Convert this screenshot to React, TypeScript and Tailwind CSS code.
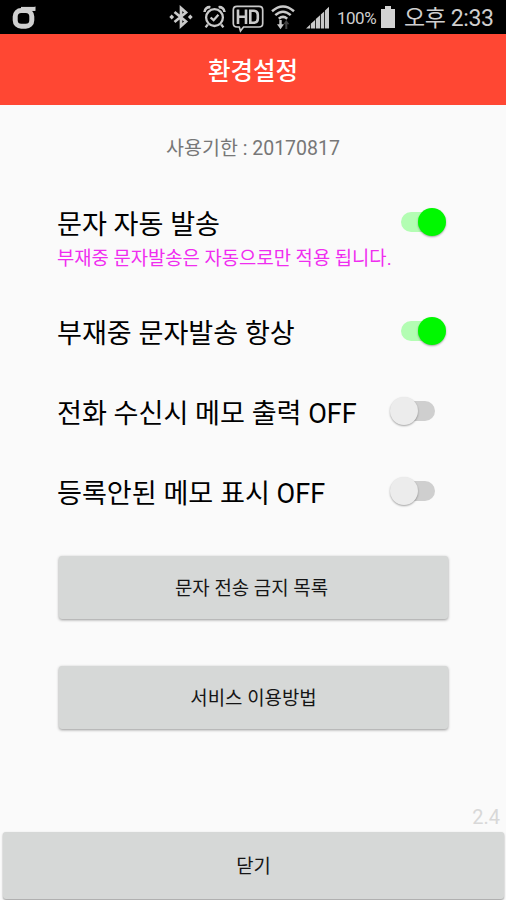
import React, { useState } from 'react';

interface SwitchProps {
  checked: boolean;
  onChange: () => void;
}

const StatusBar: React.FC = () => (
  <div className="flex h-[34px] items-center bg-black pr-3 pl-3 text-[#cfcfcf]">
    <svg width="24" height="24" viewBox="0 0 24 24" fill="none" stroke="#d0d0d0">
      <rect x="3.2" y="5.4" width="16.6" height="15.8" rx="6" strokeWidth="5" />
      <path d="M9 3.6H20.5L23.4 1.2V5.8H9Z" fill="#d0d0d0" stroke="none" />
      <path d="M9 3.9H23.2" strokeWidth="4" />
    </svg>

    <div className="ml-auto flex items-center">
      {/* bluetooth */}
      <svg width="24" height="24" viewBox="0 0 24 24" fill="none" stroke="#cacaca" strokeWidth="2.7">
        <path d="M5.5 7L17 16.5L12 21V3L17 7.5L5.5 17" />
        <path d="M.3 12L2.7 9.6L5.1 12L2.7 14.4ZM18.9 12L21.3 9.6L23.7 12L21.3 14.4Z" fill="#cacaca" stroke="none" />
      </svg>
      {/* alarm */}
      <svg className="ml-[10px]" width="23" height="24" viewBox="0 0 23 24" fill="none" stroke="#cacaca" strokeWidth="2.3">
        <circle cx="11.5" cy="12.6" r="8.4" />
        <path d="M7.6 12.5L10.6 15.2L15.4 9.8M4.8 19.5L2.6 22.4M18.2 19.5L20.4 22.4" />
        <path d="M1.5 7A5 5 0 0 1 7.4 2.2M21.5 7A5 5 0 0 0 15.6 2.2" strokeWidth="2.6" />
      </svg>
      {/* HD voice */}
      <svg className="mt-[3px] ml-[6px]" width="32" height="28" viewBox="0 0 32 28" fill="none" stroke="#cacaca">
        <path d="M5 1.4H27Q30.7 1.4 30.7 5V18.5Q30.7 22 27 22H11.5L8.5 26L7.3 22H5Q1.3 22 1.3 18.5V5Q1.3 1.4 5 1.4Z" strokeWidth="1.7" />
        <path d="M6 4.5V19M14 4.5V19M6 11.7H14M18.3 5.8V17.7H21.5Q25.8 17.7 25.8 13.7V9.8Q25.8 5.8 21.5 5.8Z" strokeWidth="2.6" />
      </svg>
      {/* wifi */}
      <svg className="ml-[7px]" width="24" height="26" viewBox="0 0 24 26" fill="none" stroke="#cacaca" strokeWidth="2.5">
        <path d="M1 7.3Q12 -2.3 23 7.3M4.3 11.2Q12 4.2 19.7 11.2M7.8 14.7Q12 11 16.2 14.7" />
        <path d="M9.5 16V22" strokeWidth="2.4" />
        <path d="M6 20.3H13L9.5 25.2Z" fill="#cacaca" stroke="none" />
        <path d="M15.3 25V19" stroke="#444" strokeWidth="2" />
        <path d="M12.3 20.3L15.3 16L18.3 20.3Z" fill="#444" stroke="none" />
      </svg>
      {/* signal */}
      <svg className="ml-[10px]" width="25" height="24" viewBox="0 0 25 24" fill="#cacaca">
        <path d="M1 23.5L5 19.7V23.5ZM5.8 18.8L10 15V23.5H5.8ZM10.8 14.1L15 10.3V23.5H10.8ZM15.8 9.5L19.2 6.4V23.5H15.8ZM20 5.5L24 1.8V23.5H20Z" />
      </svg>
      <span className="ml-[7px] w-[40px] pt-[2px] text-[17px] leading-6 tracking-[-0.5px] whitespace-nowrap">100%</span>
      <svg className="ml-[4px]" width="14" height="24" viewBox="0 0 14 24" fill="#d2d2d2">
        <path d="M4 1H10V4H14V23H0V4H4Z" />
      </svg>
      <span className="ml-[9px] w-[90px] pt-[3px] text-[23px] leading-[31px] tracking-[-0.4px] whitespace-nowrap">오후 2:33</span>
    </div>
  </div>
);

const Switch: React.FC<SwitchProps> = ({ checked, onChange }) => (
  <button
    role="switch"
    aria-checked={checked}
    onClick={onChange}
    className={`flex h-7 w-[45px] shrink-0 items-center ${checked ? '' : 'mr-[11px]'}`}
  >
    <span
      className={`flex h-5 items-center rounded-full ${
        checked ? 'w-[44px] justify-end bg-[#b3fdb3]' : 'ml-[5px] w-[40px] justify-start bg-[#cfcfcf]'
      }`}
    >
      <span
        className={`size-7 shrink-0 rounded-full shadow-[0_1px_2px_rgba(0,0,0,0.35)] ${
          checked ? '-mr-px bg-[#00f800]' : '-ml-[5px] bg-[#ececec]'
        }`}
      />
    </span>
  </button>
);

const App: React.FC = () => {
  const [autoSend, setAutoSend] = useState(true);
  const [always, setAlways] = useState(true);
  const [callMemo, setCallMemo] = useState(false);
  const [unknownMemo, setUnknownMemo] = useState(false);

  const rowClass = 'flex h-10 items-center justify-between text-[27.1px] leading-10 text-black whitespace-nowrap';
  const labelClass = 'pt-[5px]';
  const buttonClass =
    'h-[63px] w-full rounded-[3px] bg-[#d6d8d7] pt-[3px] text-[18.9px] text-[#151515] shadow-[0_1px_3px_rgba(0,0,0,0.4)]';

  return (
    <div className="flex h-[900px] w-[506px] flex-col overflow-hidden bg-[#fafafa] font-['Roboto','Noto_Sans_CJK_KR',sans-serif]">
      <StatusBar />

      <header className="flex h-[71px] items-center justify-center bg-[#ff4733] pt-[6px]">
        <h1 className="text-[24.5px] font-medium text-white">환경설정</h1>
      </header>

      <main className="flex flex-1 flex-col px-[58px]">
        <p className="mt-[29px] text-center text-[19.5px] leading-[30px] text-[#777]">사용기한 : 20170817</p>

        <div className="mt-[38px] -ml-px pr-[2px]">
          <div className={rowClass}>
            <span className={labelClass}>문자 자동 발송</span>
            <Switch checked={autoSend} onChange={() => setAutoSend(!autoSend)} />
          </div>
          <p className="pt-[2px] text-[18.8px] leading-[30px] whitespace-nowrap text-[#f02df0]">
            부재중 문자발송은 자동으로만 적용 됩니다.
          </p>
          <div className={`mt-[37px] ${rowClass}`}>
            <span className={labelClass}>부재중 문자발송 항상</span>
            <Switch checked={always} onChange={() => setAlways(!always)} />
          </div>
          <div className={`mt-10 ${rowClass}`}>
            <span className={labelClass}>전화 수신시 메모 출력 {callMemo ? 'ON' : 'OFF'}</span>
            <Switch checked={callMemo} onChange={() => setCallMemo(!callMemo)} />
          </div>
          <div className={`mt-10 ${rowClass}`}>
            <span className={labelClass}>등록안된 메모 표시 {unknownMemo ? 'ON' : 'OFF'}</span>
            <Switch checked={unknownMemo} onChange={() => setUnknownMemo(!unknownMemo)} />
          </div>
        </div>

        <div className="mt-[45px] flex flex-col gap-[47px] pl-px">
          <button className={`pr-1 ${buttonClass}`}>문자 전송 금지 목록</button>
          <button className={buttonClass}>서비스 이용방법</button>
        </div>
      </main>

      <footer className="pr-[2px] pl-[3px]">
        <p className="pr-[4px] text-right text-[20px] leading-[30px] text-[#d8d8d8]">2.4</p>
        <button className="h-[67px] w-full rounded-[3px] bg-[#d6d8d7] pt-1 text-[18.8px] text-[#151515] shadow-[0_1px_2px_rgba(0,0,0,0.4)]">
          닫기
        </button>
        <div className="h-px" />
      </footer>
    </div>
  );
};

export default App;
